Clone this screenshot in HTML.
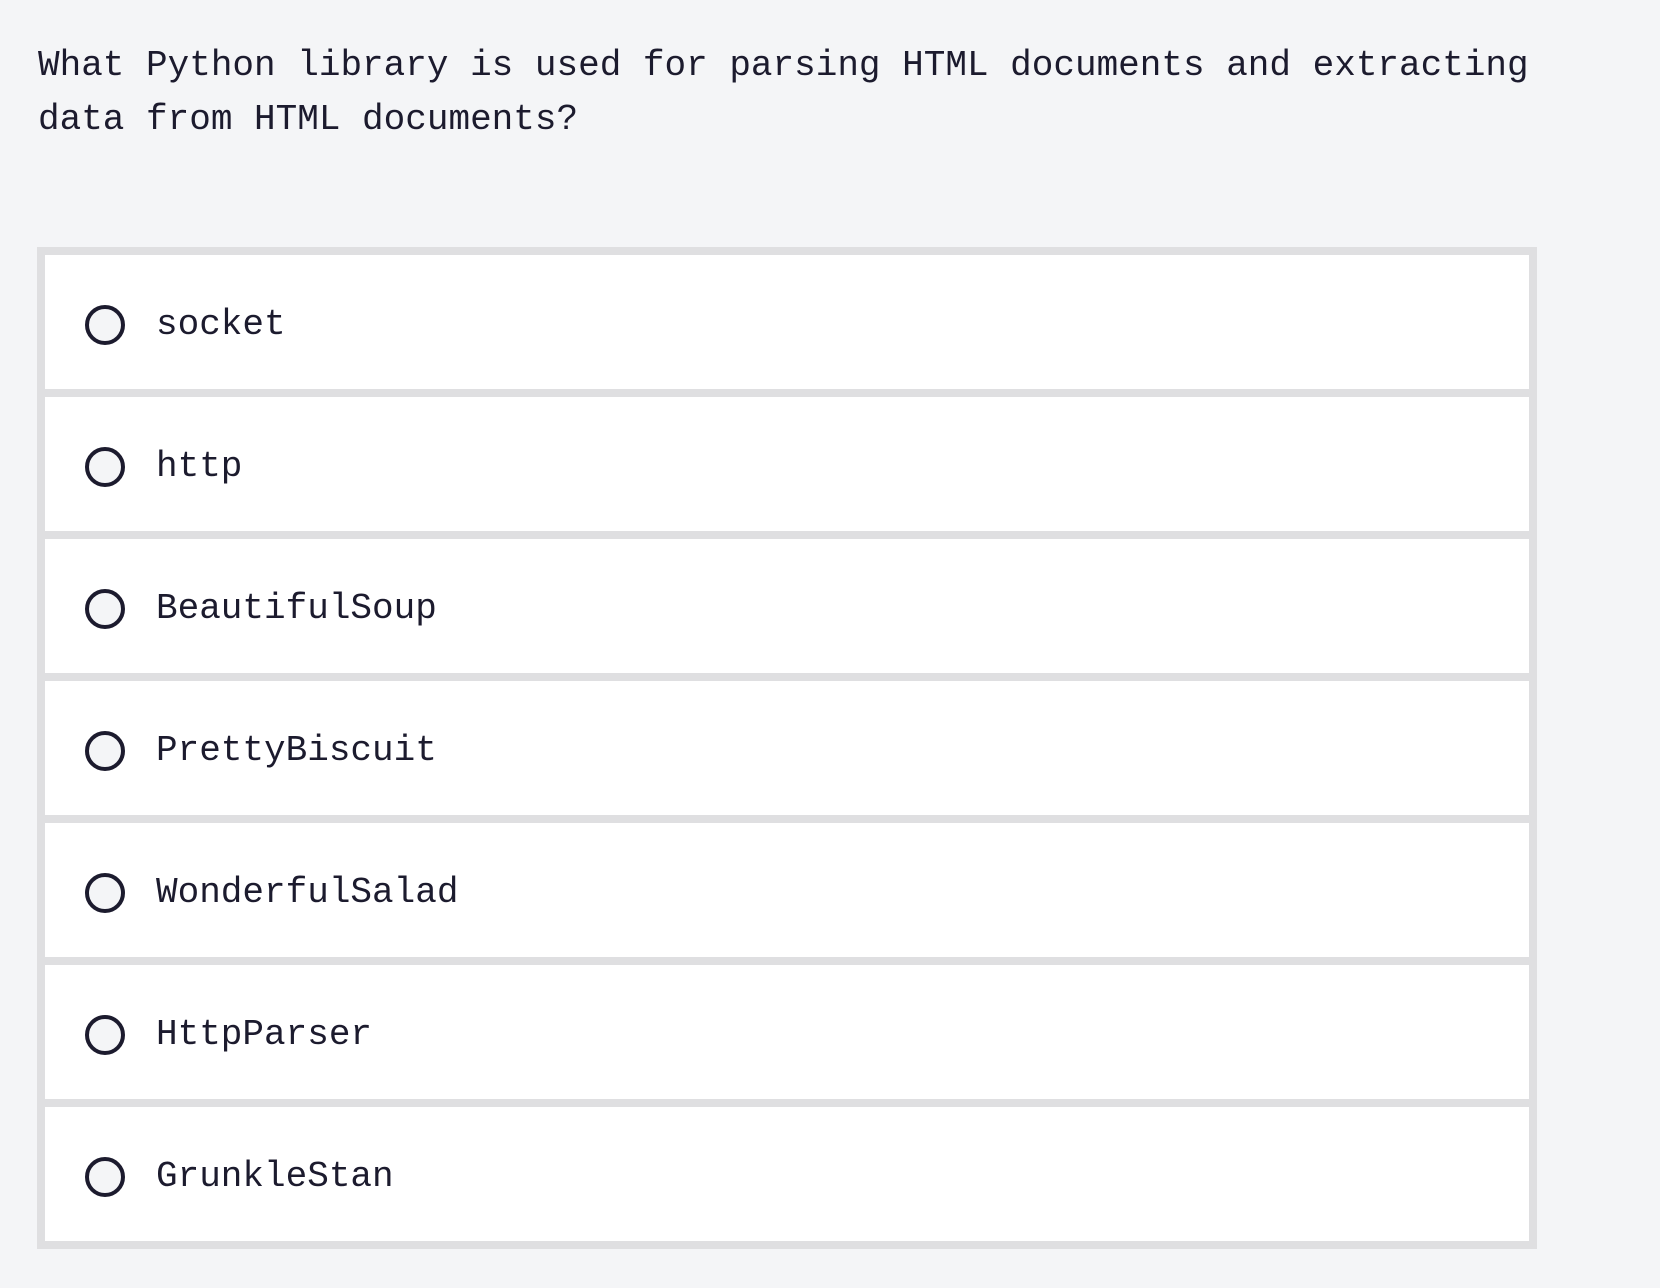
<!DOCTYPE html>
<html><head><meta charset="utf-8"><style>
html,body{margin:0;padding:0;background:#f4f5f7;width:1660px;height:1288px;overflow:hidden}
body{font-family:"Liberation Mono",monospace;color:#1c1b2e}
.q{position:absolute;left:38px;top:39px;width:1560px;font-size:36px;line-height:54px;margin:0}
.box{position:absolute;left:37px;top:247px;width:1484px;background:#dfdfe1;padding:8px 8px 0 8px}
.row{height:134px;background:#fff;margin-bottom:8px;position:relative}
.c{position:absolute;left:40px;top:50px;width:32px;height:32px;border:4px solid #1c1b2e;border-radius:50%;background:#f4f5f7}
.t{position:absolute;left:111px;top:3px;line-height:134px;font-size:36px;white-space:pre}
</style></head><body>
<p class="q">What Python library is used for parsing HTML documents and extracting data from HTML documents?</p>
<div class="box">
<div class="row"><div class="c"></div><div class="t">socket</div></div>
<div class="row"><div class="c"></div><div class="t">http</div></div>
<div class="row"><div class="c"></div><div class="t">BeautifulSoup</div></div>
<div class="row"><div class="c"></div><div class="t">PrettyBiscuit</div></div>
<div class="row"><div class="c"></div><div class="t">WonderfulSalad</div></div>
<div class="row"><div class="c"></div><div class="t">HttpParser</div></div>
<div class="row"><div class="c"></div><div class="t">GrunkleStan</div></div>
</div>
</body></html>
